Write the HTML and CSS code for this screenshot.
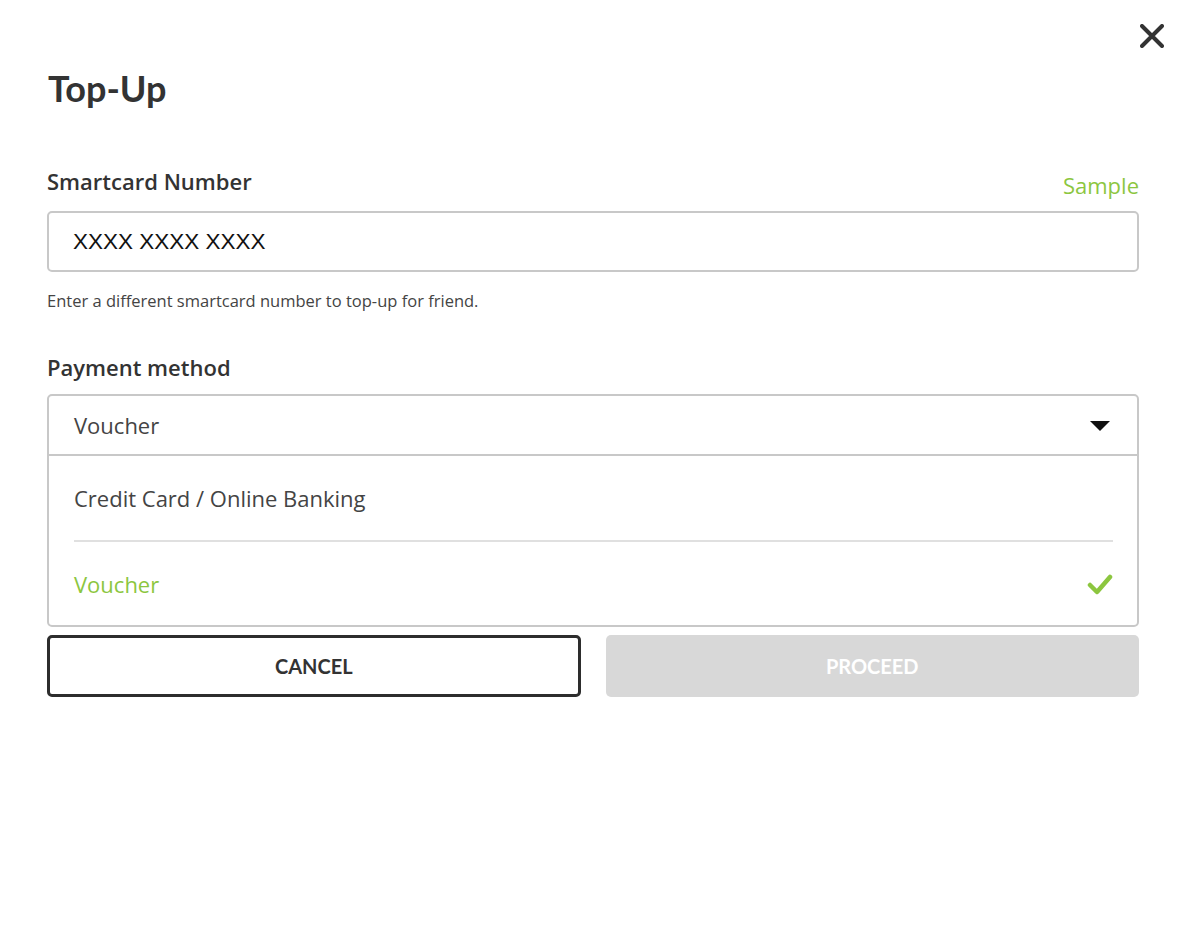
FILE: index.html
```html
<!DOCTYPE html>
<html>
<head>
<meta charset="utf-8">
<link rel="stylesheet" href="styles.css">
</head>
<body>
<div class="modal">
  <div class="close-row">
    <button class="close" aria-label="Close">
      <svg width="24" height="24" viewBox="0 0 24 24"><path d="M2 2 L22 22 M22 2 L2 22" stroke="#333" stroke-width="4" stroke-linecap="round"/></svg>
    </button>
  </div>
  <h1 class="title">Top-Up</h1>

  <div class="field-head">
    <label class="label">Smartcard Number</label>
    <a class="sample">Sample</a>
  </div>
  <div class="input">XXXX XXXX XXXX</div>
  <p class="help">Enter a different smartcard number to top-up for friend.</p>

  <div class="field-head pm">
    <label class="label">Payment method</label>
  </div>
  <div class="select">
    <div class="select-head">
      <span>Voucher</span>
      <svg class="caret" width="20" height="10" viewBox="0 0 20 10"><path d="M0 0 H20 L10 10 Z" fill="#111"/></svg>
    </div>
    <div class="options">
      <div class="option">Credit Card / Online Banking</div>
      <div class="option selected">
        <span>Voucher</span>
        <svg width="26" height="22" viewBox="0 0 26 22"><path d="M3 12 L10 19 L23 4" fill="none" stroke="#8cc63f" stroke-width="4.5" stroke-linecap="round" stroke-linejoin="round"/></svg>
      </div>
    </div>
  </div>

  <div class="actions">
    <button class="btn cancel">CANCEL</button>
    <button class="btn proceed">PROCEED</button>
  </div>
</div>
</body>
</html>
```

FILE: styles.css
```css
* { box-sizing: border-box; }
html, body { margin: 0; padding: 0; background: #fff; }
body { font-family: "Open Sans", Lato, sans-serif; color: #333; }

.modal { padding: 24px 49px 0 47px; }

.close-row { display: flex; justify-content: flex-end; margin-right: -25px; height: 26px; }
.close { border: 0; background: none; padding: 0; width: 24px; height: 24px; cursor: pointer; }

.title { margin: 16px 0 0 1px; font-family: Lato, "Open Sans", sans-serif; font-size: 36px; font-weight: 700; color: #333; line-height: 44px; }

.field-head { display: flex; justify-content: space-between; align-items: flex-end; margin-top: 56px; height: 30px; }
.label { font-size: 22px; font-weight: 600; color: #333; line-height: 30px; }
.sample { font-size: 22px; color: #8cc63f; line-height: 30px; margin-bottom: -4px; }

.input { margin-top: 15px; height: 61px; border: 2px solid #c8c8c8; border-radius: 5px; padding: 0 24px; display: flex; align-items: center; font-family: "Liberation Sans", Arial, sans-serif; font-size: 22.5px; color: #111; }

.help { margin: 18px 0 0 0; font-size: 16.5px; color: #444; line-height: 22px; }

.field-head.pm { margin-top: 40px; }

.select { margin-top: 12px; border: 2px solid #c8c8c8; border-radius: 5px; }
.select-head { height: 60px; border-bottom: 2px solid #c8c8c8; display: flex; align-items: center; justify-content: space-between; padding: 0 27px 0 25px; font-size: 22px; color: #444; }
.caret { margin-top: 2px; }

.options { padding: 0 24px 0 25px; }
.option { height: 84px; display: flex; align-items: center; justify-content: space-between; font-size: 22px; color: #444; }
.option + .option { border-top: 2px solid #e0e0e0; }
.option.selected { color: #8cc63f; height: 85px; }

.actions { display: grid; grid-template-columns: 1fr 1fr; gap: 25px; margin-top: 8px; }
.btn { height: 62px; padding: 0; border-radius: 5px; font-family: Lato, "Open Sans", sans-serif; font-size: 20px; font-weight: 700; cursor: pointer; }
.cancel { background: #fff; border: 3px solid #2d2d2d; color: #333; }
.proceed { background: #d8d8d8; border: 0; color: #fff; }
```
